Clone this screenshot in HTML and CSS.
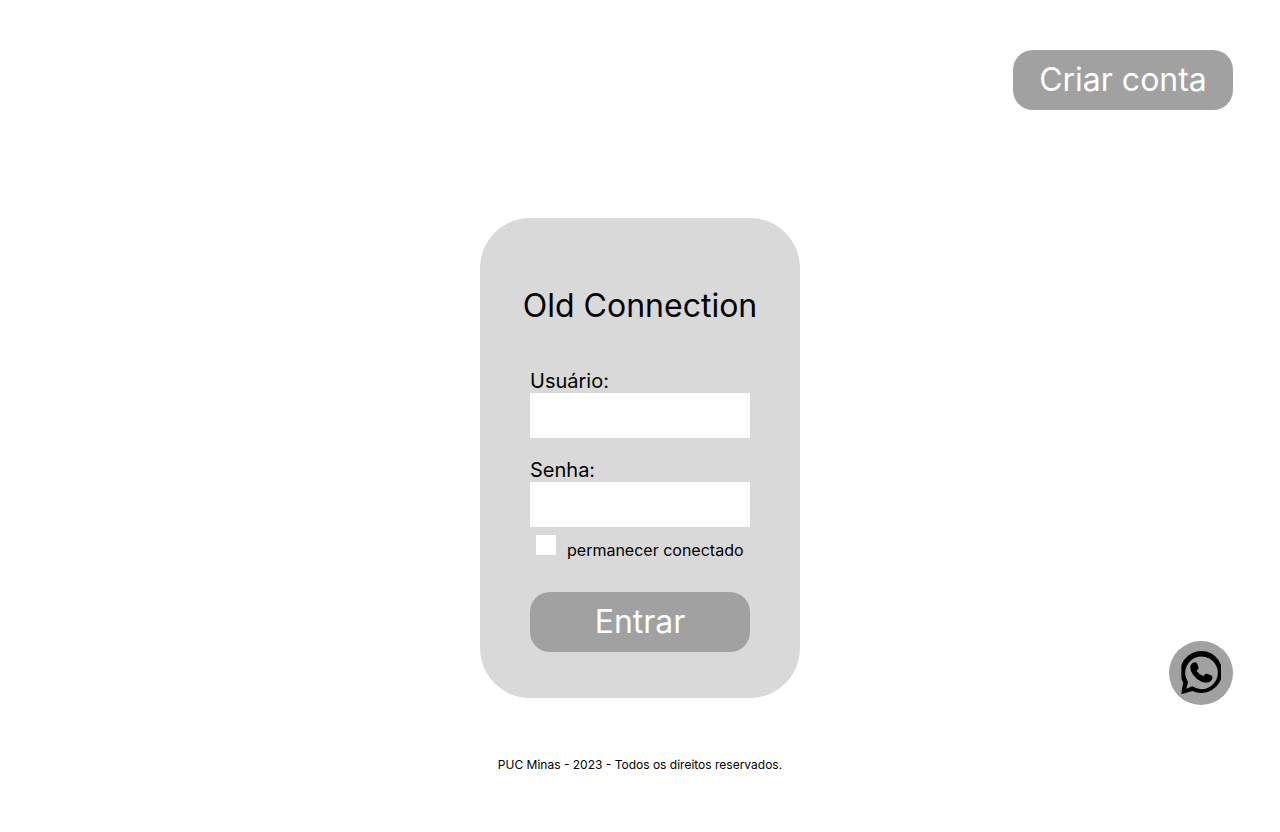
FILE: index.html
```html
<!DOCTYPE html>
<html lang="pt-BR">
<head>
  <meta charset="utf-8">
  <meta name="viewport" content="width=device-width, initial-scale=1">
  <title>Old Connection</title>
  <link rel="stylesheet" href="styles.css">
</head>
<body>
  <header class="topbar">
    <button class="button" type="button">Criar conta</button>
  </header>
  <main class="content">
    <form class="card">
      <h1 class="title">Old Connection</h1>
      <div class="field">
        <label class="label" for="user">Usuário:</label>
        <input class="input" id="user" name="user" type="text">
      </div>
      <div class="field">
        <label class="label" for="password">Senha:</label>
        <input class="input" id="password" name="password" type="password">
      </div>
      <div class="remember">
        <input class="checkbox" id="remember" name="remember" type="checkbox">
        <label class="remember-label" for="remember">permanecer conectado</label>
      </div>
      <button class="button" type="submit">Entrar</button>
    </form>
  </main>
  <footer class="footer">PUC Minas - 2023 - Todos os direitos reservados.</footer>
  <a class="whatsapp" href="#" aria-label="WhatsApp">
    <svg class="whatsapp-icon" viewBox="27 27 192 192" aria-hidden="true">
      <clipPath id="edge"><rect x="64" y="50" width="119" height="140"/></clipPath>
      <g clip-path="url(#edge)">
        <path fill-rule="evenodd" d="M64 187 L64 180 L70 153 A63 63 0 1 1 97 177 Z M79 170 L97 163 A49 49 0 1 0 84 150 Z"/>
      </g>
      <path d="M94 97 Q98 91 106 91 Q110 91 112 97 L116 107 Q116 110 110 116 Q116 127 130 132 L136 126 Q139 124 143 126 L156 131 Q159 134 157 140 Q153 149 146 151 Q136 153 125 149 Q109 142 99 128 Q91 117 91 108 Q91 101 94 97 Z"/>
    </svg>
  </a>
</body>
</html>
```
FILE: styles.css
```css
* {
  box-sizing: border-box;
}

body {
  display: flex;
  flex-direction: column;
  min-height: 100vh;
  margin: 0;
  background: #fff;
  color: #000;
  font-family: Inter, "Liberation Sans", sans-serif;
}

.topbar {
  display: flex;
  justify-content: flex-end;
  padding: 50px 47px 0;
}

.button {
  width: 220px;
  height: 60px;
  padding: 0;
  border: 0;
  border-radius: 20px;
  background: #a1a1a1;
  color: #fff;
  font: inherit;
  font-size: 32px;
  line-height: 40px;
  cursor: pointer;
}

.content {
  display: flex;
  justify-content: center;
  padding-top: 108px;
}

.card {
  display: flex;
  flex-direction: column;
  align-items: center;
  width: 320px;
  padding: 68px 40px 46px;
  border-radius: 50px;
  background: #d9d9d9;
}

.title {
  margin: 0 0 43px;
  font-size: 32px;
  font-weight: 400;
  line-height: 40px;
  white-space: nowrap;
}

.field {
  display: flex;
  flex-direction: column;
  width: 220px;
}

.field + .field {
  margin-top: 20px;
}

.label {
  font-size: 20px;
  line-height: 24px;
}

.input {
  width: 100%;
  height: 45px;
  padding: 0 12px;
  border: 0;
  border-radius: 0;
  background: #fff;
  font: inherit;
  font-size: 20px;
}

.remember {
  display: flex;
  align-items: flex-start;
  gap: 11px;
  width: 220px;
  margin-bottom: 32px;
  padding: 8px 0 0 6px;
}

.checkbox {
  appearance: none;
  width: 20px;
  height: 20px;
  margin: 0;
  background: #fff;
}

.checkbox:checked {
  background: #000;
  border: 4px solid #fff;
}

.remember-label {
  padding-top: 5px;
  font-size: 16px;
  line-height: 20px;
  white-space: nowrap;
}

.footer {
  padding: 59px 0;
  font-size: 12px;
  line-height: 16px;
  text-align: center;
}

.whatsapp {
  position: fixed;
  right: 47px;
  bottom: 127px;
  width: 64px;
  height: 64px;
  border-radius: 50%;
  background: #a1a1a1;
  color: #000;
}

.whatsapp-icon {
  display: block;
  width: 100%;
  height: 100%;
}
```
